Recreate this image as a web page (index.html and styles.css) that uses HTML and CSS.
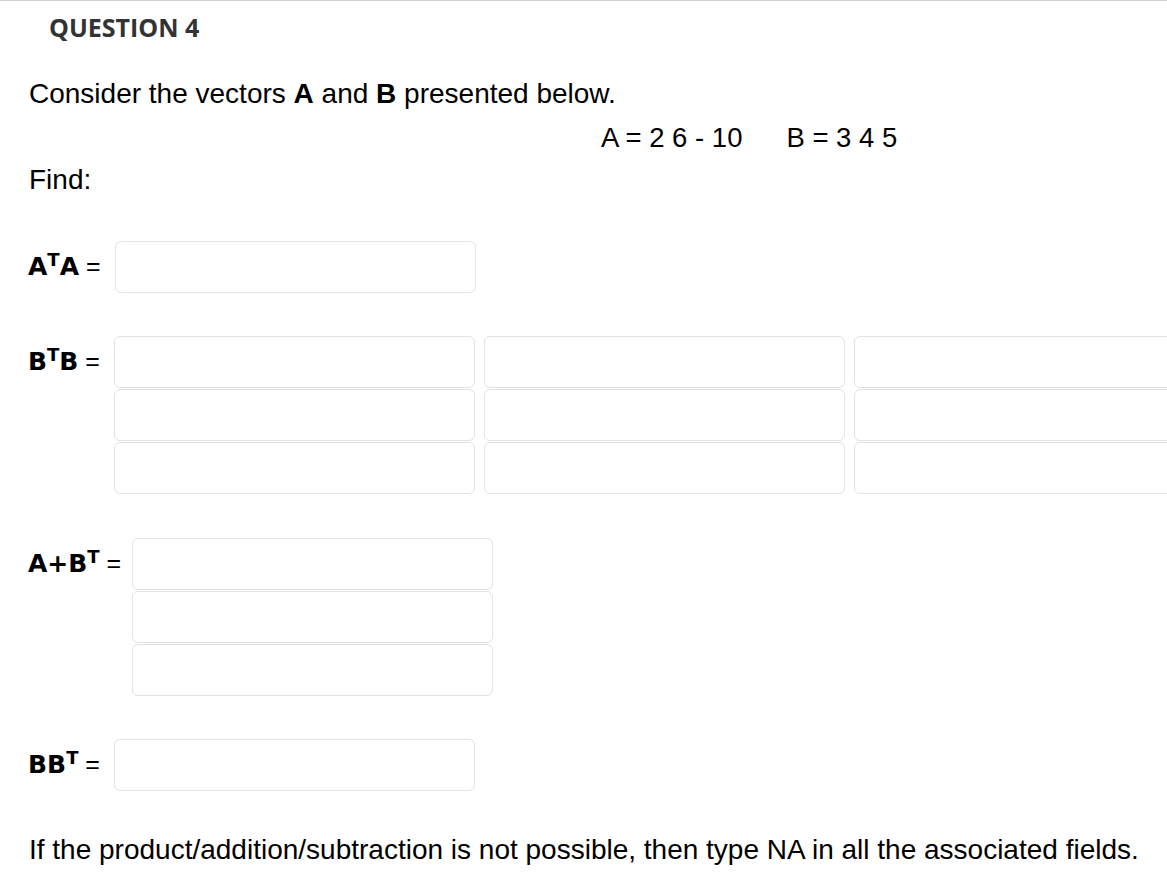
FILE: index.html
```html
<!DOCTYPE html>
<html>
<head>
<meta charset="utf-8">
<link rel="stylesheet" href="styles.css">
</head>
<body>
<div class="page">
  <h2 class="title">QUESTION 4</h2>
  <p class="intro">Consider the vectors <b>A</b> and <b>B</b> presented below.</p>
  <p class="vectors"><span>A = 2 6 - 10</span><span class="vb">B = 3 4 5</span></p>
  <p class="find">Find:</p>

  <div class="row r1">
    <div class="label"><b>A<sup>T</sup>A</b> =</div>
    <div class="grid g1">
      <input class="box" type="text">
    </div>
  </div>

  <div class="row r2">
    <div class="label"><b>B<sup>T</sup>B</b> =</div>
    <div class="grid g3">
      <input class="box" type="text"><input class="box" type="text"><input class="box" type="text">
      <input class="box" type="text"><input class="box" type="text"><input class="box" type="text">
      <input class="box" type="text"><input class="box" type="text"><input class="box" type="text">
    </div>
  </div>

  <div class="row r3">
    <div class="label"><b>A+B<sup>T</sup></b> =</div>
    <div class="grid g1">
      <input class="box" type="text">
      <input class="box" type="text">
      <input class="box" type="text">
    </div>
  </div>

  <div class="row r4">
    <div class="label"><b>BB<sup>T</sup></b> =</div>
    <div class="grid g1">
      <input class="box" type="text">
    </div>
  </div>

  <p class="note">If the product/addition/subtraction is not possible, then type NA in all the associated fields.</p>
</div>
</body>
</html>
```

FILE: styles.css
```css
html, body {
  margin: 0;
  padding: 0;
  overflow: hidden;
  background: #fff;
}
.page {
  border-top: 1px solid #cfcfcf;
  font-family: "Liberation Sans", Arial, sans-serif;
  color: #000;
  width: 1167px;
  overflow: hidden;
}
.title {
  margin: 9px 0 0 0;
  padding-left: 49px;
  font-family: "Open Sans", sans-serif;
  font-weight: 700;
  font-size: 25px;
  line-height: 34px;
  color: #333;
}
.intro {
  margin: 34px 0 0 0;
  padding-left: 29px;
  font-size: 28px;
  line-height: 32px;
}
.vectors {
  margin: 12px 0 0 0;
  padding-left: 601px;
  font-size: 27.5px;
  line-height: 32px;
  white-space: nowrap;
}
.vectors .vb {
  margin-left: 44px;
}
.find {
  margin: 10px 0 0 0;
  padding-left: 29px;
  font-size: 28px;
  line-height: 32px;
}
.row {
  display: flex;
  align-items: flex-start;
  padding-left: 28px;
}
.r1 { margin-top: 45px; }
.r2 { margin-top: 43px; }
.r3 { margin-top: 44px; }
.r4 { margin-top: 43px; }
.label {
  padding-top: 10px;
  margin-right: 14px;
  font-size: 25px;
  line-height: 30px;
  white-space: nowrap;
}
.r3 .label {
  margin-right: 11px;
}
.label b {
  font-family: "DejaVu Sans", Verdana, sans-serif;
  font-weight: 700;
  font-size: 25px;
}
.label sup {
  font-size: 18px;
  vertical-align: 9px;
  line-height: 0;
}
.grid {
  display: grid;
  row-gap: 1px;
  column-gap: 9px;
}
.g1 { grid-template-columns: 361px; }
.g3 { grid-template-columns: 361px 361px 361px; }
.box {
  box-sizing: border-box;
  width: 361px;
  height: 52px;
  margin: 0;
  border: 1px solid #e2e2e2;
  border-radius: 6px;
  background: #fff;
  padding: 0 8px;
  font-size: 16px;
  outline: none;
}
.note {
  margin: 43px 0 0 0;
  padding-left: 29px;
  font-size: 28px;
  line-height: 32px;
  white-space: nowrap;
}
```
